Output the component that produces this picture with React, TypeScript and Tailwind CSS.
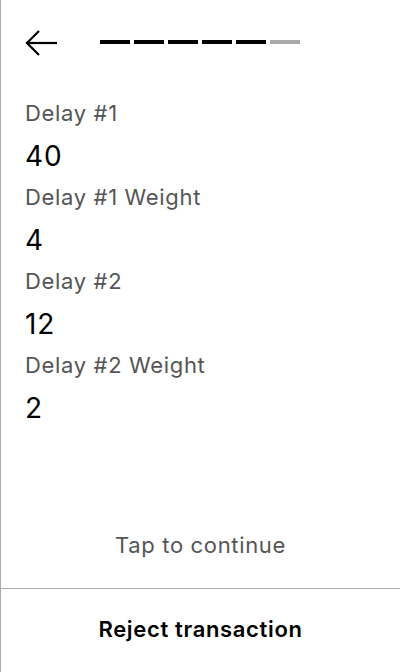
const fields = [
  { label: "Delay #1", value: "40" },
  { label: "Delay #1 Weight", value: "4" },
  { label: "Delay #2", value: "12" },
  { label: "Delay #2 Weight", value: "2" },
];

const steps = [true, true, true, true, true, false];

export default function App() {
  return (
    <div
      className="h-[672px] w-[400px] flex flex-col bg-white border-l border-[#aaaaaa] text-black"
      style={{ fontFamily: "Inter, 'Noto Sans', sans-serif" }}
    >
      {/* header */}
      <div className="flex items-start pl-6 pt-[29px]">
        <button className="block">
          <svg width="32" height="28" viewBox="0 0 32 28" fill="none" stroke="black" strokeWidth="2.2">
            <path d="M1.5 14H32" />
            <path d="M14 2L2 14L14 26" />
          </svg>
        </button>
        <div className="flex gap-1 ml-[43px] mt-[11px]">
          {steps.map((done, i) => (
            <div key={i} className={`w-[30px] h-1 ${done ? "bg-black" : "bg-[#aaaaaa]"}`} />
          ))}
        </div>
      </div>

      {/* fields */}
      <div className="flex flex-col px-6 mt-[42px]">
        {fields.map((f) => (
          <div key={f.label} className="flex flex-col">
            <span className="text-[22px] leading-[28px] tracking-[0.03em] text-[#555555] mb-[11px]">{f.label}</span>
            <span className="text-[28px] leading-[36px] tracking-[0.03em] text-black mb-[9px]">{f.value}</span>
          </div>
        ))}
      </div>

      <div className="flex-1" />

      <div className="text-center text-[22px] leading-[28px] tracking-[0.03em] text-[#555555] mb-[29px]">
        Tap to continue
      </div>
      <div className="border-t border-[#aaaaaa] h-[84px] flex items-center justify-center pb-[4px]">
        <span className="text-[22px] leading-[28px] tracking-[0.03em] font-semibold text-black">Reject transaction</span>
      </div>
    </div>
  );
}
